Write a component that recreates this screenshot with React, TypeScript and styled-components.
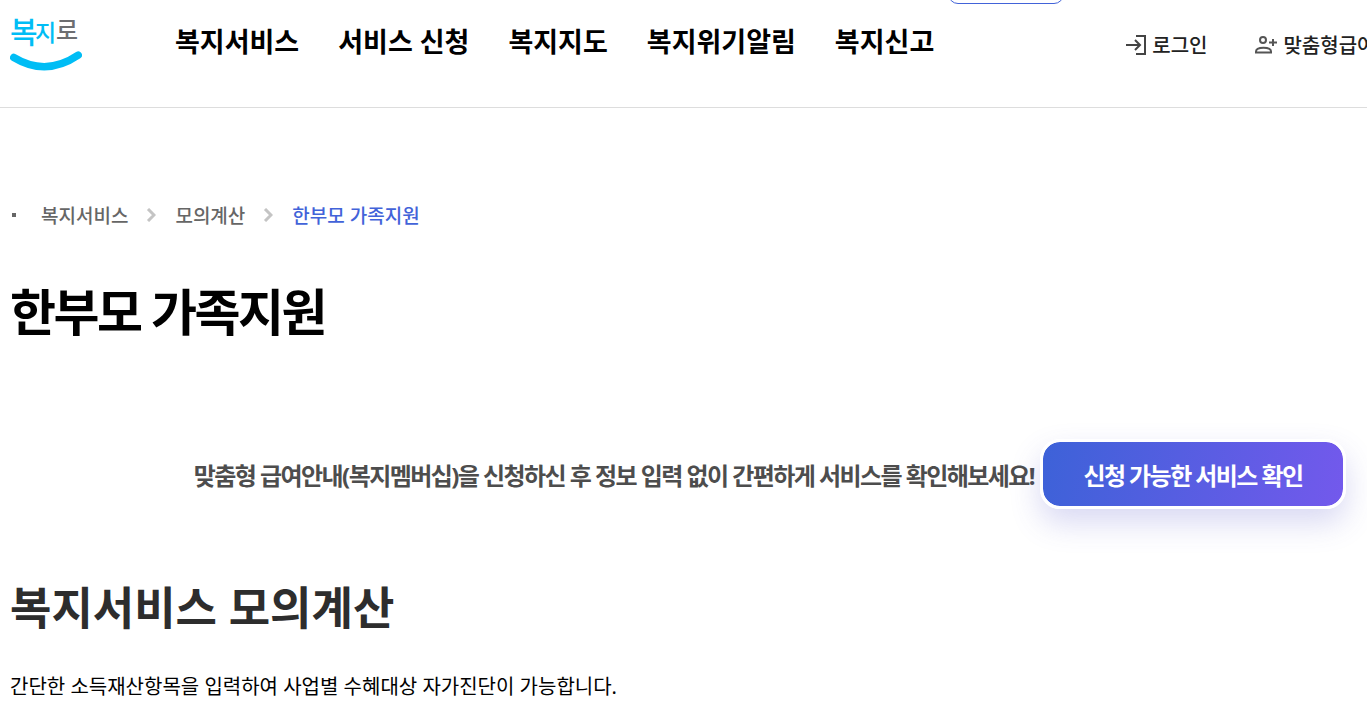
import React from "react";
import styled, { createGlobalStyle } from "styled-components";

const GlobalStyle = createGlobalStyle`
  * { box-sizing: border-box; }
  body {
    margin: 0;
    background: #fff;
    color: #000;
    font-family: "Noto Sans", "Noto Sans CJK KR", sans-serif;
    overflow-x: hidden;
  }
  a { color: inherit; text-decoration: none; }
`;

const Header = styled.header`
  position: relative;
  display: flex;
  align-items: flex-start;
  height: 108px;
  padding: 8px 0 0 10px;
  border-bottom: 1px solid #ddd;
  white-space: nowrap;
  overflow: hidden;
`;

const PillTab = styled.span`
  position: absolute;
  top: -36px;
  left: 948px;
  width: 116px;
  height: 40px;
  border: 1px solid #4263d9;
  border-radius: 10px;
`;

const LogoLink = styled.a`
  flex: none;
  display: block;
  width: 72px;
  height: 64px;
`;

const Nav = styled.nav`
  flex: none;
  margin-left: 93px;
`;

const NavList = styled.ul`
  display: flex;
  gap: 39px;
  margin: 0;
  padding: 14px 0 0;
  list-style: none;
  font-size: 27px;
  font-weight: 700;
  line-height: 40px;
`;

const Utility = styled.div`
  flex: none;
  display: flex;
  gap: 47px;
  margin-left: 191px;
  padding-top: 23px;
`;

const UtilityLink = styled.a`
  display: flex;
  align-items: center;
  gap: 5px;
  color: #222;
  font-size: 20px;
  font-weight: 500;
  line-height: 30px;

  svg {
    margin-bottom: 2px;
  }
`;

const Main = styled.main`
  padding: 93px 21px 20px 10px;
`;

const Crumbs = styled.ol`
  display: flex;
  align-items: center;
  margin: 0;
  padding: 0;
  list-style: none;
  font-size: 19px;
  font-weight: 500;
  line-height: 30px;
  color: #666;
`;

const Home = styled.li`
  width: 4px;
  height: 4px;
  margin: 0 25px 2px 2px;
  background: #666;
`;

const Crumb = styled.li<{ $current?: boolean }>`
  display: flex;
  align-items: center;
  color: ${(p) => (p.$current ? "#4263d9" : "inherit")};
`;

const Chevron = styled.svg`
  margin: 0 19px 2px 18px;
`;

const PageTitle = styled.h1`
  margin: 44px 0 0;
  font-size: 50px;
  font-weight: 700;
  line-height: 74px;
  letter-spacing: -0.05em;
`;

const Promo = styled.section`
  display: flex;
  justify-content: flex-end;
  align-items: center;
  gap: 6px;
  margin-top: 90px;
  font-size: 24px;
  font-weight: 700;
  letter-spacing: -0.065em;
`;

const PromoText = styled.p`
  margin: 0;
  padding-top: 4px;
  color: #4d4d4d;
  line-height: 36px;
`;

const PromoButton = styled.button`
  flex: none;
  width: 306px;
  height: 70px;
  padding: 0;
  border: 3px solid #fff;
  border-radius: 20px;
  background: linear-gradient(100deg, #3d62d8, #7359ec) padding-box;
  box-shadow: 0 14px 30px rgba(80, 80, 200, 0.22);
  color: #fff;
  font: inherit;
  letter-spacing: inherit;
`;

const SectionTitle = styled.h2`
  margin: 66px 0 0;
  color: #2d2d2d;
  font-size: 45px;
  font-weight: 700;
  line-height: 66px;
`;

const Description = styled.p`
  margin: 31px 0 0;
  font-size: 20px;
  line-height: 30px;
`;

const Logo = () => (
  <svg width="72" height="64" viewBox="10 8 72 64" role="img" aria-label="복지로">
    <g fontFamily="Noto Sans CJK KR, sans-serif" fontWeight="500" fill="#00bdf5">
      <text x="10" y="43" fontSize="30">복</text>
      <text x="35" y="41" fontSize="23">지</text>
      <text x="56" y="39" fontSize="24" fill="#6d6e71">로</text>
    </g>
    <path d="M13.800 57.500Q46 77 78.200 55.200" fill="none" stroke="#00bdf5" strokeWidth="7.500" strokeLinecap="round" />
  </svg>
);

const LoginIcon = () => (
  <svg width="22" height="22" viewBox="0 0 22 22" fill="none" stroke="#444" strokeWidth="2" aria-hidden="true">
    <path d="M11 2H20V20H11M1 11H15M10 6L15 11L10 16" />
  </svg>
);

const PersonAddIcon = () => (
  <svg width="24" height="22" viewBox="0 0 24 22" fill="none" stroke="#555" strokeWidth="2" aria-hidden="true">
    <circle cx="9" cy="6" r="3" />
    <path d="M2 18.500V17.500C2 12.500 17 12.500 17 17.500V18.500ZM15 8.500H23M19 5V12" />
  </svg>
);

const Separator = () => (
  <Chevron width="10" height="14" viewBox="0 0 10 14" fill="none" stroke="#c4c4c4" strokeWidth="3" aria-hidden="true">
    <path d="M2 1L8 7L2 13" />
  </Chevron>
);

const menu = ["복지서비스", "서비스 신청", "복지지도", "복지위기알림", "복지신고"];

export default function App() {
  return (
    <>
      <GlobalStyle />
      <Header>
        <PillTab aria-hidden="true" />
        <LogoLink href="#"><Logo /></LogoLink>
        <Nav>
          <NavList>
            {menu.map((item) => (
              <li key={item}><a href="#">{item}</a></li>
            ))}
          </NavList>
        </Nav>
        <Utility>
          <UtilityLink href="#"><LoginIcon />로그인</UtilityLink>
          <UtilityLink href="#"><PersonAddIcon />맞춤형급여</UtilityLink>
        </Utility>
      </Header>
      <Main>
        <nav>
          <Crumbs>
            <Home />
            <Crumb><a href="#">복지서비스</a><Separator /></Crumb>
            <Crumb><a href="#">모의계산</a><Separator /></Crumb>
            <Crumb $current><a href="#">한부모 가족지원</a></Crumb>
          </Crumbs>
        </nav>
        <PageTitle>한부모 가족지원</PageTitle>
        <Promo>
          <PromoText>맞춤형 급여안내(복지멤버십)을 신청하신 후 정보 입력 없이 간편하게 서비스를 확인해보세요!</PromoText>
          <PromoButton type="button">신청 가능한 서비스 확인</PromoButton>
        </Promo>
        <SectionTitle>복지서비스 모의계산</SectionTitle>
        <Description>간단한 소득재산항목을 입력하여 사업별 수혜대상 자가진단이 가능합니다.</Description>
      </Main>
    </>
  );
}
